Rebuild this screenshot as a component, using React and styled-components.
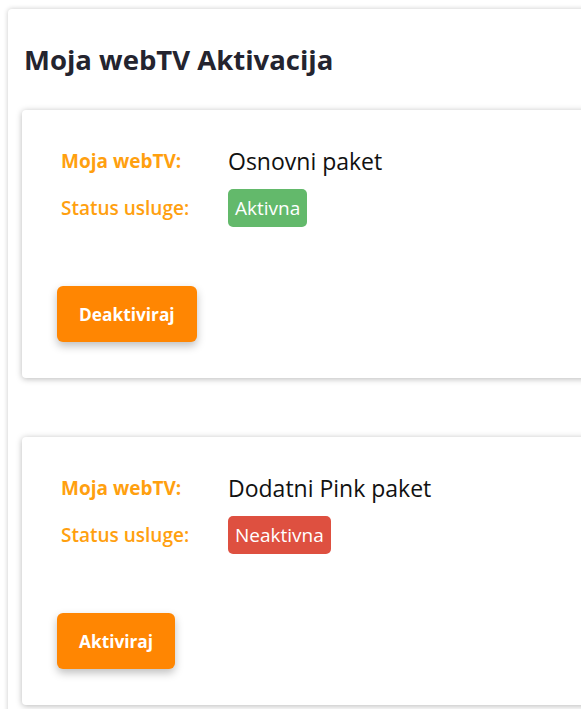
import React from "react";
import styled, { createGlobalStyle } from "styled-components";

const Global = createGlobalStyle`
  html, body { margin: 0; padding: 0; background: #fff; overflow: hidden; }
  body { padding: 9px 0 0 8px; font-family: "Open Sans", "Noto Sans", sans-serif; }
`;

const Panel = styled.section`
  width: 640px;
  background: #fff;
  border-radius: 4px;
  box-shadow: 0 0 5px rgba(0, 0, 0, 0.22);
  padding: 28px 0 30px 14px;
`;

const Title = styled.h1`
  margin: 0 0 27px 2px;
  font-size: 27.5px;
  font-weight: 700;
  color: #24242f;
  line-height: 46px;
`;

const List = styled.div`
  display: flex;
  flex-direction: column;
  gap: 59px;
`;

const Card = styled.div`
  background: #fff;
  border-radius: 4px;
  box-shadow: 0 1px 6px rgba(0, 0, 0, 0.28);
  padding: 35px 35px 36px 35px;
`;

const Info = styled.div`
  display: grid;
  grid-template-columns: 168px auto;
  row-gap: 12px;
  align-items: center;
  justify-items: start;
  padding-left: 4px;
  margin-bottom: 59px;
`;

const Label = styled.span`
  font-size: 19px;
  font-weight: ${(p) => (p.$strong ? 700 : 600)};
  color: #ffa00f;
`;

const Value = styled.span`
  font-size: 23px;
  line-height: 32px;
  color: #111;
  margin-left: -1px;
`;

const Badge = styled.span`
  display: inline-block;
  font-size: 19px;
  color: #fff;
  background: ${(p) => (p.$active ? "#63b96b" : "#de5040")};
  border-radius: 5px;
  padding: 6px 7px;
  line-height: 26px;
  margin-left: -1px;
`;

const Button = styled.button`
  font-family: inherit;
  font-size: 17.3px;
  font-weight: 700;
  color: #fff;
  background: #ff8602;
  border: none;
  border-radius: 6px;
  height: 56px;
  padding: 0 22px;
  box-shadow: 0 4px 8px rgba(0, 0, 0, 0.25);
  cursor: pointer;
`;

const items = [
  { name: "Osnovni paket", active: true },
  { name: "Dodatni Pink paket", active: false },
];

export default function App() {
  return (
    <>
      <Global />
      <Panel>
        <Title>Moja webTV Aktivacija</Title>
        <List>
          {items.map((it) => (
            <Card key={it.name}>
              <Info>
                <Label $strong>Moja webTV:</Label>
                <Value>{it.name}</Value>
                <Label>Status usluge:</Label>
                <Badge $active={it.active}>{it.active ? "Aktivna" : "Neaktivna"}</Badge>
              </Info>
              <Button>{it.active ? "Deaktiviraj" : "Aktiviraj"}</Button>
            </Card>
          ))}
        </List>
      </Panel>
    </>
  );
}
